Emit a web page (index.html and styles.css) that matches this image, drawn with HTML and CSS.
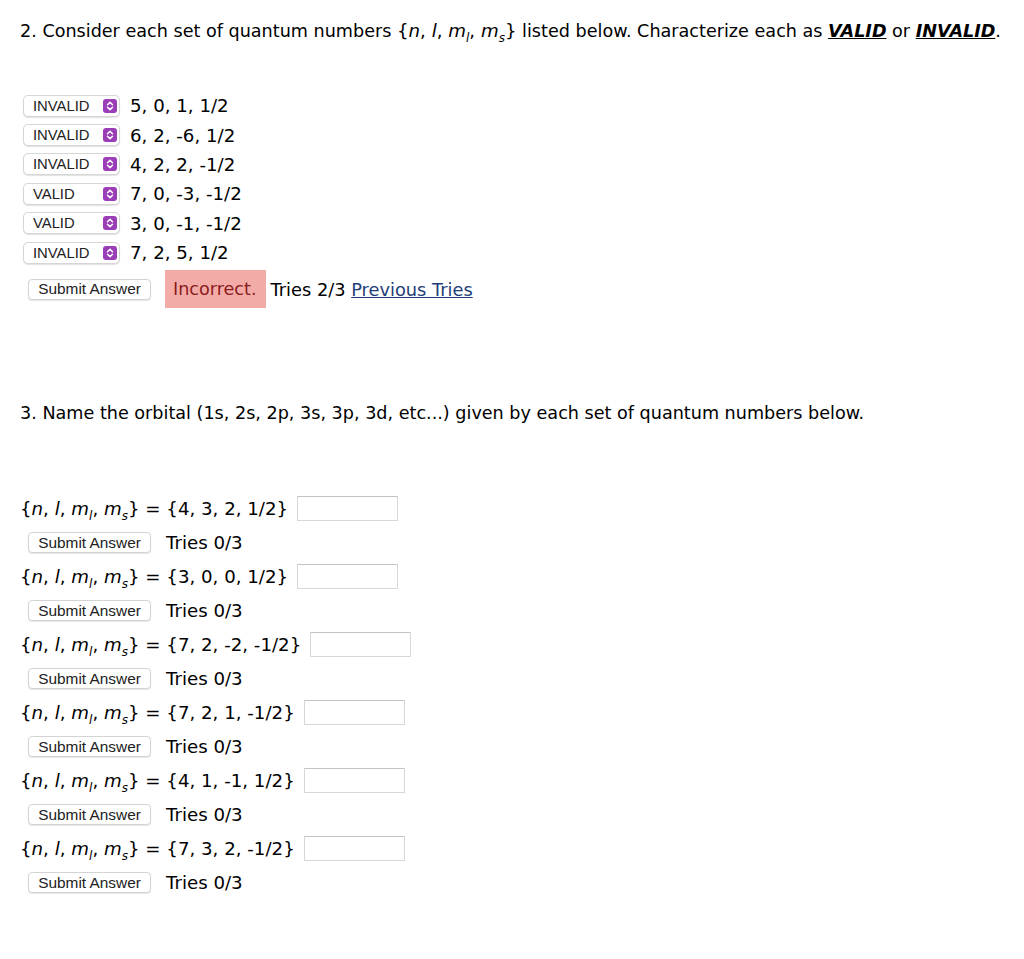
FILE: index.html
```html
<!DOCTYPE html>
<html>
<head>
  <title>Quantum Numbers</title>
  <link rel="stylesheet" href="styles.css">
</head>
<body>
  <div class="page">

    <div class="problem">
      <p class="question">2. Consider each set of quantum numbers <span class="num">{<i>n</i>, <i>l</i>, <i>m<sub>l</sub></i>, <i>m<sub>s</sub></i>}</span> listed below. Characterize each as <b class="key">VALID</b> or <b class="key">INVALID</b>.</p>

      <div class="choices">
        <div class="choice">
          <span class="select"><select><option>VALID</option><option selected>INVALID</option></select><svg class="arrow" viewBox="0 0 14 14"><rect width="14" height="14" rx="3"/><path d="M4.5 5.7 7 3.4 9.5 5.7M4.5 8.3 7 10.6 9.5 8.3"/></svg></span>
          <span class="set">5, 0, 1, 1/2</span>
        </div>
        <div class="choice">
          <span class="select"><select><option>VALID</option><option selected>INVALID</option></select><svg class="arrow" viewBox="0 0 14 14"><rect width="14" height="14" rx="3"/><path d="M4.5 5.7 7 3.4 9.5 5.7M4.5 8.3 7 10.6 9.5 8.3"/></svg></span>
          <span class="set">6, 2, -6, 1/2</span>
        </div>
        <div class="choice">
          <span class="select"><select><option>VALID</option><option selected>INVALID</option></select><svg class="arrow" viewBox="0 0 14 14"><rect width="14" height="14" rx="3"/><path d="M4.5 5.7 7 3.4 9.5 5.7M4.5 8.3 7 10.6 9.5 8.3"/></svg></span>
          <span class="set">4, 2, 2, -1/2</span>
        </div>
        <div class="choice">
          <span class="select"><select><option selected>VALID</option><option>INVALID</option></select><svg class="arrow" viewBox="0 0 14 14"><rect width="14" height="14" rx="3"/><path d="M4.5 5.7 7 3.4 9.5 5.7M4.5 8.3 7 10.6 9.5 8.3"/></svg></span>
          <span class="set">7, 0, -3, -1/2</span>
        </div>
        <div class="choice">
          <span class="select"><select><option selected>VALID</option><option>INVALID</option></select><svg class="arrow" viewBox="0 0 14 14"><rect width="14" height="14" rx="3"/><path d="M4.5 5.7 7 3.4 9.5 5.7M4.5 8.3 7 10.6 9.5 8.3"/></svg></span>
          <span class="set">3, 0, -1, -1/2</span>
        </div>
        <div class="choice">
          <span class="select"><select><option>VALID</option><option selected>INVALID</option></select><svg class="arrow" viewBox="0 0 14 14"><rect width="14" height="14" rx="3"/><path d="M4.5 5.7 7 3.4 9.5 5.7M4.5 8.3 7 10.6 9.5 8.3"/></svg></span>
          <span class="set">7, 2, 5, 1/2</span>
        </div>
      </div>

      <div class="feedback">
        <button class="submit">Submit Answer</button>
        <span class="incorrect">Incorrect.</span>
        <span class="tries">Tries 2/3 <a href="#">Previous Tries</a></span>
      </div>
    </div>

    <div class="problem orbitals">
      <p class="question">3. Name the orbital (1s, 2s, 2p, 3s, 3p, 3d, etc...) given by each set of quantum numbers below.</p>

      <div class="part">
        <div class="formula">{<i>n</i>, <i>l</i>, <i>m<sub>l</sub></i>, <i>m<sub>s</sub></i>} = {4, 3, 2, 1/2} <input type="text"></div>
        <div class="status"><button class="submit">Submit Answer</button><span class="tries">Tries 0/3</span></div>
      </div>
      <div class="part">
        <div class="formula">{<i>n</i>, <i>l</i>, <i>m<sub>l</sub></i>, <i>m<sub>s</sub></i>} = {3, 0, 0, 1/2} <input type="text"></div>
        <div class="status"><button class="submit">Submit Answer</button><span class="tries">Tries 0/3</span></div>
      </div>
      <div class="part">
        <div class="formula">{<i>n</i>, <i>l</i>, <i>m<sub>l</sub></i>, <i>m<sub>s</sub></i>} = {7, 2, -2, -1/2} <input type="text"></div>
        <div class="status"><button class="submit">Submit Answer</button><span class="tries">Tries 0/3</span></div>
      </div>
      <div class="part">
        <div class="formula">{<i>n</i>, <i>l</i>, <i>m<sub>l</sub></i>, <i>m<sub>s</sub></i>} = {7, 2, 1, -1/2} <input type="text"></div>
        <div class="status"><button class="submit">Submit Answer</button><span class="tries">Tries 0/3</span></div>
      </div>
      <div class="part">
        <div class="formula">{<i>n</i>, <i>l</i>, <i>m<sub>l</sub></i>, <i>m<sub>s</sub></i>} = {4, 1, -1, 1/2} <input type="text"></div>
        <div class="status"><button class="submit">Submit Answer</button><span class="tries">Tries 0/3</span></div>
      </div>
      <div class="part">
        <div class="formula">{<i>n</i>, <i>l</i>, <i>m<sub>l</sub></i>, <i>m<sub>s</sub></i>} = {7, 3, 2, -1/2} <input type="text"></div>
        <div class="status"><button class="submit">Submit Answer</button><span class="tries">Tries 0/3</span></div>
      </div>
    </div>

  </div>
</body>
</html>
```

FILE: styles.css
```css
body {
  margin: 0;
  padding: 0;
  background: #fff;
  color: #000;
  font-family: "DejaVu Sans", Verdana, sans-serif;
  font-size: 17.6px;
}

.page {
  padding: 0 20px;
}

.question {
  margin: 0;
  line-height: 20px;
}

.problem {
  padding-top: 21px;
}

.orbitals {
  padding-top: 95px;
}

.num,
.set,
.formula,
.tries {
  font-size: 18.2px;
}

sub {
  font-size: 12px;
  line-height: 0;
  vertical-align: -5px;
}

.key {
  font-style: italic;
  text-decoration: underline;
}

.choices {
  margin-top: 50px;
}

.choice {
  height: 29.4px;
  display: flex;
  align-items: center;
}

.select {
  position: relative;
  display: inline-block;
  margin-left: 3px;
  margin-right: 10px;
}

.select select {
  appearance: none;
  -webkit-appearance: none;
  width: 97px;
  height: 22px;
  padding: 0 0 0 9px;
  border: 1px solid #d6d6d6;
  border-radius: 5px;
  background: #fff;
  box-shadow: 0 1px 1px rgba(0, 0, 0, 0.12);
  font-family: "Liberation Sans", Arial, sans-serif;
  font-size: 14.8px;
  color: #222;
  display: block;
}

.arrow {
  position: absolute;
  right: 3px;
  top: 4px;
  width: 14px;
  height: 14px;
  pointer-events: none;
}

.arrow rect {
  fill: #9a3db6;
}

.arrow path {
  fill: none;
  stroke: #fff;
  stroke-width: 1.5;
  stroke-linecap: round;
  stroke-linejoin: round;
}

.submit {
  height: 21px;
  width: 123px;
  padding: 0;
  margin-left: 8px;
  border: 1px solid #d4d4d4;
  border-radius: 4px;
  background: #fff;
  box-shadow: 0 1px 1px rgba(0, 0, 0, 0.1);
  font-family: "Liberation Sans", Arial, sans-serif;
  font-size: 15.4px;
  color: #222;
}

.feedback {
  margin-top: 3px;
  height: 38px;
  display: flex;
  align-items: center;
}

.incorrect {
  margin-left: 14px;
  height: 38px;
  line-height: 38px;
  padding: 0 9px 0 8px;
  background: #f3aba8;
  color: #8a1c1c;
}

.feedback .tries {
  margin-left: 5px;
  font-size: 17.8px;
}

.tries a {
  color: #1f3e78;
}

.part:first-of-type {
  margin-top: 69px;
}

.formula {
  height: 33px;
  display: flex;
  align-items: center;
  white-space: pre;
}

.formula input {
  width: 101px;
  height: 25px;
  box-sizing: border-box;
  margin-left: 3px;
  border: 1px solid #d8d8d8;
  border-top-color: #c4c4c4;
  padding: 0 4px;
  font-size: 13px;
}

.status {
  height: 35px;
  display: flex;
  align-items: center;
}

.status .tries {
  margin-left: 15px;
}
```
